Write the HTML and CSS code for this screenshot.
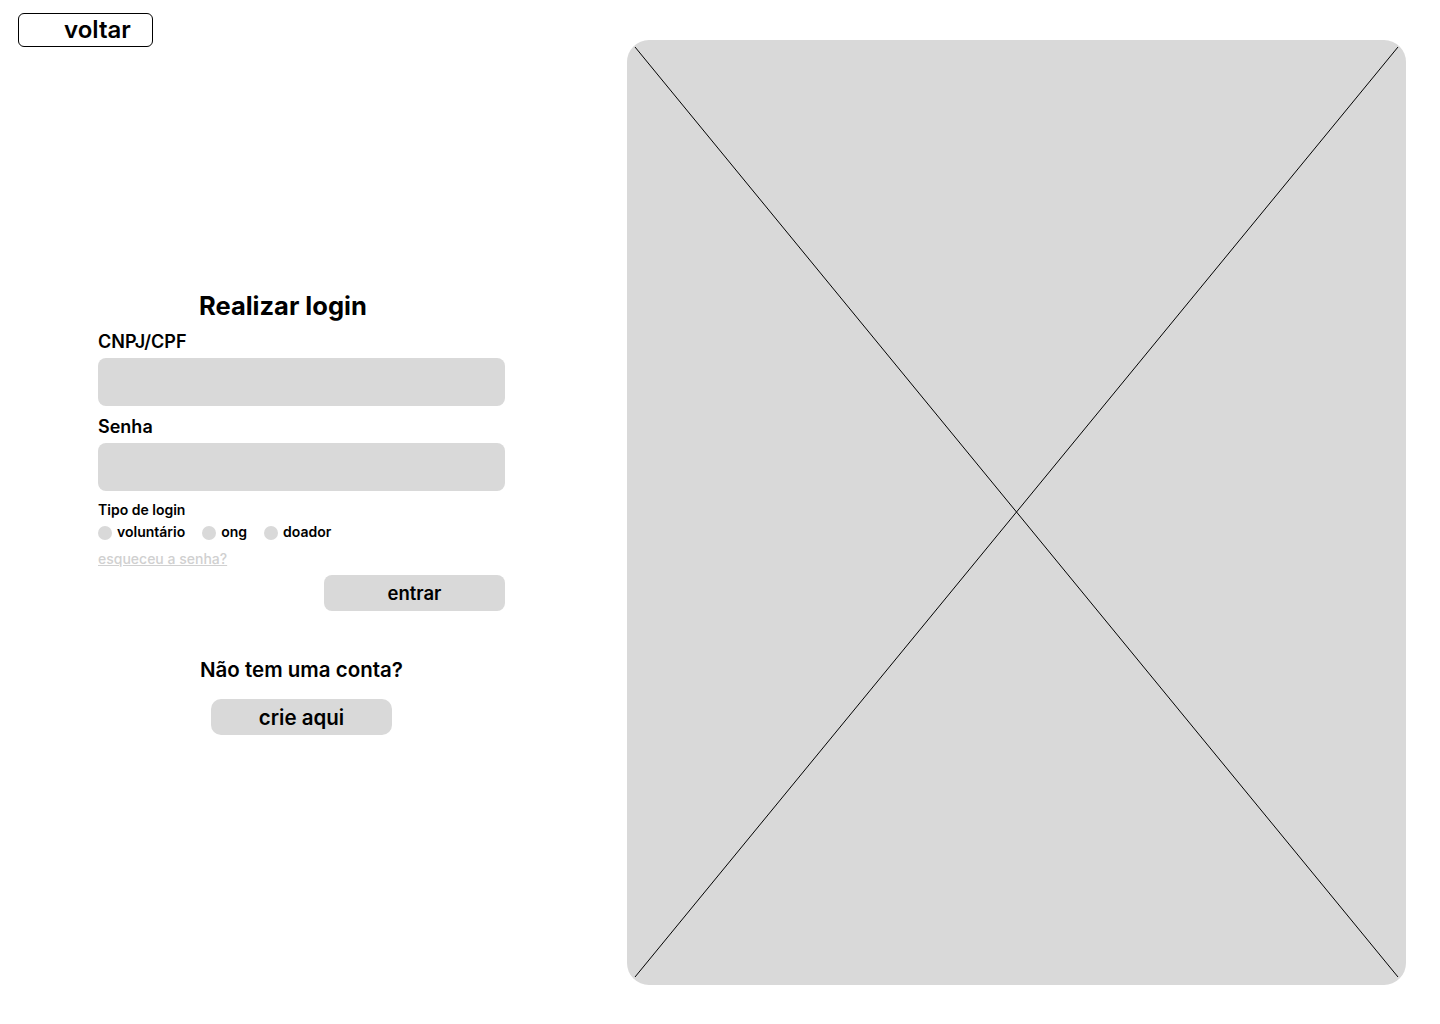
FILE: index.html
```html
<!DOCTYPE html>
<html lang="pt-BR">
<head>
<meta charset="utf-8">
<title>Realizar login</title>
<link rel="stylesheet" href="styles.css">
</head>
<body>
<div class="page">
  <div class="left">
    <button class="back">voltar</button>
    <form class="login">
      <h1 class="title">Realizar login</h1>
      <label class="label">CNPJ/CPF</label>
      <div class="input"></div>
      <label class="label">Senha</label>
      <div class="input"></div>
      <div class="type-title">Tipo de login</div>
      <div class="radios">
        <span class="radio"><span class="dot"></span>voluntário</span>
        <span class="radio"><span class="dot"></span>ong</span>
        <span class="radio"><span class="dot"></span>doador</span>
      </div>
      <a class="forgot">esqueceu a senha?</a>
      <div class="submit-row"><span class="btn submit">entrar</span></div>
      <div class="signup">
        <p class="signup-text">Não tem uma conta?</p>
        <span class="btn create">crie aqui</span>
      </div>
    </form>
  </div>
  <div class="right">
    <div class="placeholder">
      <svg class="cross" viewBox="0 0 779 945" preserveAspectRatio="none">
        <line x1="8" y1="7" x2="771" y2="937" stroke="#000" stroke-width="1"/>
        <line x1="771" y1="7" x2="8" y2="937" stroke="#000" stroke-width="1"/>
      </svg>
    </div>
  </div>
</div>
</body>
</html>
```
FILE: styles.css
```css
* { box-sizing: border-box; }
html, body { margin: 0; padding: 0; background: #fff; }
body {
  font-family: "Inter", "Noto Sans", sans-serif;
  color: #000;
  width: 1440px;
  height: 1024px;
  overflow: hidden;
}
.page {
  display: flex;
  height: 1024px;
}
.left {
  width: 627px;
  flex: none;
  display: flex;
  flex-direction: column;
}
.back {
  margin: 13px 0 0 18px;
  width: 135px;
  height: 34px;
  border: 1px solid #000;
  border-radius: 6px;
  background: #fff;
  font-family: inherit;
  font-size: 24px;
  font-weight: 600;
  color: #000;
  padding: 0 0 0 24px;
  text-align: center;
  line-height: 32px;
}
.login {
  margin: 243px 0 0 98px;
  width: 407px;
  display: flex;
  flex-direction: column;
}
.title {
  margin: 0 0 0 101px;
  font-size: 25.5px;
  font-weight: 700;
  line-height: 32px;
}
.label {
  margin-top: 9px;
  font-size: 18px;
  font-weight: 600;
  line-height: 22px;
}
.input {
  margin-top: 5px;
  height: 48px;
  background: #d9d9d9;
  border-radius: 8px;
}
.input + .label { margin-top: 10px; }
.type-title {
  margin-top: 10px;
  font-size: 14px;
  font-weight: 600;
  line-height: 18px;
}
.radios {
  display: flex;
  gap: 17px;
  margin-top: 4px;
}
.radio {
  display: flex;
  align-items: center;
  gap: 5px;
  font-size: 14px;
  font-weight: 600;
  line-height: 18px;
}
.dot {
  width: 14px;
  height: 14px;
  border-radius: 50%;
  background: #d9d9d9;
  margin-top: 2px;
}
.forgot {
  margin-top: 9px;
  font-size: 14px;
  font-weight: 500;
  color: #d0d0d0;
  text-decoration: underline;
  line-height: 18px;
  align-self: flex-start;
}
.submit-row {
  display: flex;
  justify-content: flex-end;
  margin-top: 7px;
}
.btn {
  display: flex;
  align-items: center;
  justify-content: center;
  width: 181px;
  height: 36px;
  background: #d9d9d9;
  border-radius: 8px;
  font-weight: 600;
}
.submit { font-size: 18.5px; }
.signup {
  display: flex;
  flex-direction: column;
  align-items: center;
  margin-top: 46px;
}
.signup-text {
  margin: 0;
  font-size: 20.5px;
  font-weight: 600;
  line-height: 25px;
}
.create {
  margin-top: 17px;
  font-size: 20.5px;
  border-radius: 10px;
}
.right {
  flex: none;
  padding-top: 40px;
}
.placeholder {
  width: 779px;
  height: 945px;
  background: #d9d9d9;
  border-radius: 22px;
  overflow: hidden;
}
.cross {
  display: block;
  width: 779px;
  height: 945px;
}
```
